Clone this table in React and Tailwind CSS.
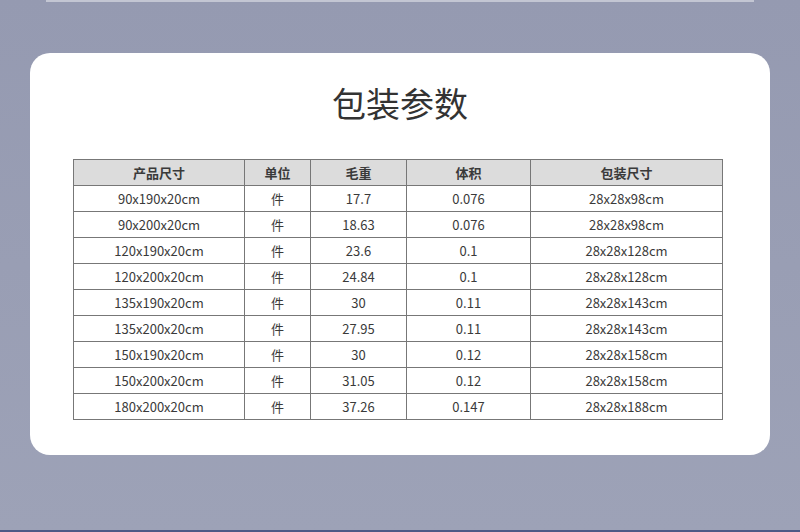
const rows = [
  ["90x190x20cm", "件", "17.7", "0.076", "28x28x98cm"],
  ["90x200x20cm", "件", "18.63", "0.076", "28x28x98cm"],
  ["120x190x20cm", "件", "23.6", "0.1", "28x28x128cm"],
  ["120x200x20cm", "件", "24.84", "0.1", "28x28x128cm"],
  ["135x190x20cm", "件", "30", "0.11", "28x28x143cm"],
  ["135x200x20cm", "件", "27.95", "0.11", "28x28x143cm"],
  ["150x190x20cm", "件", "30", "0.12", "28x28x158cm"],
  ["150x200x20cm", "件", "31.05", "0.12", "28x28x158cm"],
  ["180x200x20cm", "件", "37.26", "0.147", "28x28x188cm"],
];

const headers = ["产品尺寸", "单位", "毛重", "体积", "包装尺寸"];
const widths = ["w-[171px]", "w-[66px]", "w-[96px]", "w-[124px]", "w-[192px]"];

export default function App() {
  return (
    <div
      className="w-[800px] h-[532px] flex flex-col bg-gradient-to-b from-[#959ab1] to-[#9da2b7] text-[#333]"
      style={{ fontFamily: '"Noto Sans CJK SC", "Noto Sans", sans-serif' }}
    >
      <div className="mx-[46px] h-[2px] bg-[#c3c6d3]" />
      <div className="mt-[51px] mx-[30px] h-[402px] bg-white rounded-[20px] flex flex-col items-center">
        <h1 className="mt-[28px] text-[34px] leading-[44px] font-normal">包装参数</h1>
        <table className="mt-[34px] mr-[4px] border-collapse table-fixed border-[1.5px] border-[#555] text-[13px] text-[#3a3a3a]">
          <thead>
            <tr className="bg-[#dcdcdc] h-[26px]">
              {headers.map((h, i) => (
                <th key={h} className={`${widths[i]} border border-[#777] font-bold p-0 leading-none`}>
                  {h}
                </th>
              ))}
            </tr>
          </thead>
          <tbody>
            {rows.map((r) => (
              <tr key={r[0] + r[2]} className="h-[26px]">
                {r.map((c, i) => (
                  <td key={i} className="border border-[#777] text-center p-0 leading-none">
                    {c}
                  </td>
                ))}
              </tr>
            ))}
          </tbody>
        </table>
      </div>
      <div className="mt-auto h-[2px] bg-[#4d5a86]" />
    </div>
  );
}
